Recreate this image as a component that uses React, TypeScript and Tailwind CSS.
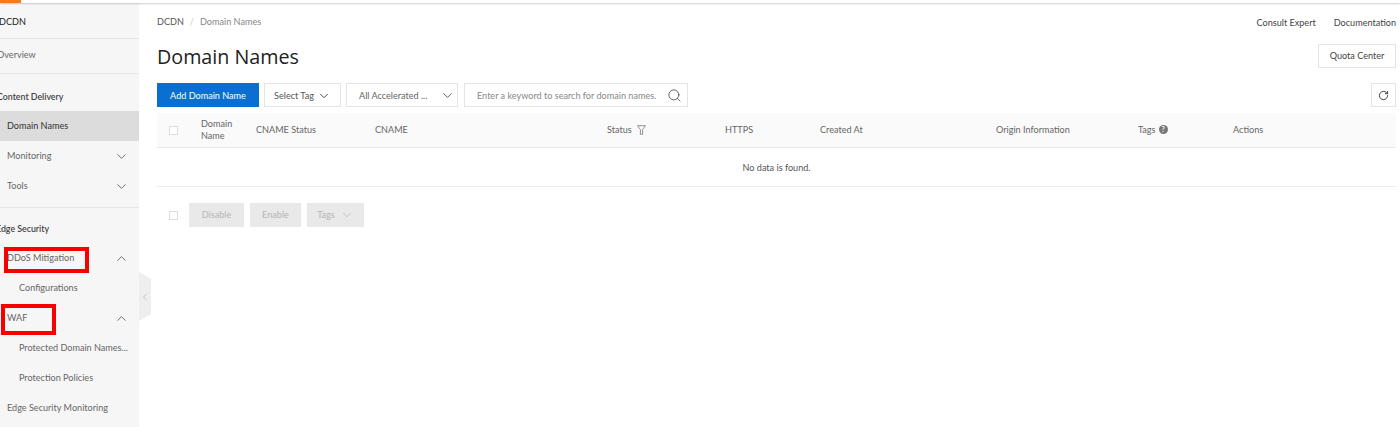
import { ChevronDown, ChevronLeft, ChevronUp, RotateCw, Search } from 'lucide-react';

const columns = ['CNAME Status', 'CNAME'];

function NavItem({ label, icon, indent = false, active = false }: { label: string; icon?: 'up' | 'down'; indent?: boolean; active?: boolean }) {
  return (
    <div className={`flex h-[30px] items-center justify-between pr-[10px] ${indent ? 'pl-[19px]' : 'pl-[7px]'} ${active ? 'bg-[#dcdcdc] text-[#333]' : 'text-[#666]'}`}>
      <span className="whitespace-nowrap">{label}</span>
      {icon === 'up' && <ChevronUp size={15} strokeWidth={1.2} className="text-[#444]" />}
      {icon === 'down' && <ChevronDown size={15} strokeWidth={1.2} className="text-[#444]" />}
    </div>
  );
}

function Sidebar() {
  return (
    <aside className="relative h-full w-[139px] shrink-0 bg-[#f6f6f6] text-[9.1px]">
      <div className="flex h-[36px] items-center border-b border-[#e4e4e4] pt-[2px] text-[#222]">
        <span className="-ml-[1px]">DCDN</span>
      </div>
      <div className="flex h-[35px] items-center border-b border-[#e8e8e8] pb-[2px] text-[#666]">
        <span className="-ml-[3px]">Overview</span>
      </div>
      <div className="flex h-[37px] items-center pt-[8px] text-[8.8px] font-semibold text-[#444]">
        <span className="-ml-[3px]">Content Delivery</span>
      </div>
      <NavItem label="Domain Names" active />
      <NavItem label="Monitoring" icon="down" />
      <NavItem label="Tools" icon="down" />
      <div className="mt-[6px] border-t border-[#e4e4e4]" />
      <div className="flex h-[35px] items-center pt-[6px] text-[8.8px] font-semibold text-[#444]">
        <span className="-ml-[4px] whitespace-nowrap">Edge Security</span>
      </div>
      <NavItem label="DDoS Mitigation" icon="up" />
      <NavItem label="Configurations" indent />
      <NavItem label="WAF" icon="up" />
      <NavItem label="Protected Domain Names..." indent />
      <NavItem label="Protection Policies" indent />
      <NavItem label="Edge Security Monitoring" />

      {/* red annotation boxes */}
      <div className="absolute left-[4px] top-[244px] h-[26px] w-[85px] border-[4px] border-[#f80000]" />
      <div className="absolute left-[1px] top-[301px] h-[31px] w-[55px] border-[4px] border-[#f80000]" />

      <div className="absolute left-[139px] top-[269px] flex h-[49px] w-[12px] items-center justify-center bg-[#eeeeee] [clip-path:polygon(0_0,100%_14%,100%_86%,0_100%)]">
        <ChevronLeft size={14} strokeWidth={1} className="text-[#999]" />
      </div>
    </aside>
  );
}

export default function App() {
  return (
    <div className="flex h-[427px] w-[1400px] flex-col overflow-hidden bg-white font-['Lato','Open_Sans',sans-serif] text-[9.1px]">
      <div className="relative z-10 h-[3px] shrink-0 bg-white shadow-[0_1px_2px_rgba(0,0,0,0.2)]">
        <div className="h-[3px] w-[21px] bg-[#f47a1f]" />
      </div>
      <div className="flex min-h-0 flex-1">
        <Sidebar />
        <main className="relative min-w-0 flex-1 pl-[18px] pr-[4px] text-[#555]">
          <div className="flex h-[36px] items-center justify-between pt-[3px]">
            <div className="flex items-center gap-[6px] pb-[1px]">
              <span className="text-[#555]">DCDN</span>
              <span className="text-[#ccc]">/</span>
              <span className="text-[#888]">Domain Names</span>
            </div>
            <div className="flex items-center gap-[18px] text-[#444]">
              <span>Consult Expert</span>
              <span>Documentation</span>
            </div>
          </div>

          <div className="flex h-[44px] items-start justify-between">
            <h1 className="pt-[3px] font-['Open_Sans',sans-serif] text-[19.7px] leading-[30px] font-normal text-[#222]">Domain Names</h1>
            <button className="mt-[5px] h-[24px] w-[78px] border border-[#e4e4e4] text-[#444]">Quota Center</button>
          </div>

          <div className="flex h-[24px] items-stretch justify-between">
            <div className="flex items-stretch">
              <button className="w-[102px] bg-[#0a6fd0] pt-[1px] text-white">Add Domain Name</button>
              <button className="ml-[5px] flex w-[77px] items-center justify-center gap-[3px] border border-[#e4e4e4] pt-[1px] text-[#555]">
                Select Tag <ChevronDown size={14} strokeWidth={1.5} className="text-[#333]" />
              </button>
              <button className="ml-[5px] flex w-[112px] items-center justify-between border border-[#e4e4e4] pl-[12px] pr-[2px] pt-[1px] text-[#666]">
                All Accelerated ... <ChevronDown size={15} strokeWidth={1.2} className="text-[#333]" />
              </button>
              <div className="ml-[6px] flex w-[224px] items-center justify-between border border-[#e4e4e4] pl-[12px] pr-[5px] pt-[1px] text-[#888]">
                <span className="whitespace-nowrap">Enter a keyword to search for domain names.</span>
                <Search size={15} strokeWidth={1.3} className="text-[#444]" />
              </div>
            </div>
            <button className="flex w-[25px] items-center justify-center border border-[#e4e4e4] text-[#333]">
              <RotateCw size={11} strokeWidth={2} />
            </button>
          </div>

          <div className="mt-[6px] grid h-[35px] grid-cols-[44px_55px_119px_232px_118px_95px_176px_142px_95px_1fr] items-center border-b border-[#eaeaea] bg-[#fafafa] text-[#666]">
            <div className="pl-[12px]">
              <div className="h-[9px] w-[9px] border border-[#dcdcdc] bg-white" />
            </div>
            <div className="leading-[12px]">Domain<br />Name</div>
            {columns.map(c => <div key={c}>{c}</div>)}
            <div className="flex items-center gap-[5px]">
              Status
              <svg width="9" height="10" viewBox="0 0 9 10" fill="none" stroke="#777" strokeWidth="0.8">
                <path d="M0.5 0.7h8L5.6 4.6v4.7H3.4V4.6z" />
              </svg>
            </div>
            <div>HTTPS</div>
            <div>Created At</div>
            <div>Origin Information</div>
            <div className="flex items-center gap-[3px]">
              Tags
              <span className="flex h-[9px] w-[9px] items-center justify-center rounded-full bg-[#777] text-[7px] font-bold leading-none text-white">?</span>
            </div>
            <div>Actions</div>
          </div>

          <div className="flex h-[39px] items-center justify-center border-b border-[#eaeaea] pt-[2px] text-[#555]">
            No data is found.
          </div>

          <div className="mt-[16px] flex h-[24px] items-stretch pl-[12px]">
            <div className="mr-[11px] h-[9px] w-[9px] self-center border border-[#dcdcdc]" />
            <button className="w-[55px] bg-[#e9e9e9] text-[#b5b5b5]">Disable</button>
            <button className="ml-[6px] w-[51px] bg-[#e9e9e9] text-[#b5b5b5]">Enable</button>
            <button className="ml-[6px] flex w-[57px] items-center justify-center gap-[5px] bg-[#e9e9e9] text-[#b5b5b5]">
              Tags <ChevronDown size={14} strokeWidth={1.2} />
            </button>
          </div>
        </main>
      </div>
    </div>
  );
}
